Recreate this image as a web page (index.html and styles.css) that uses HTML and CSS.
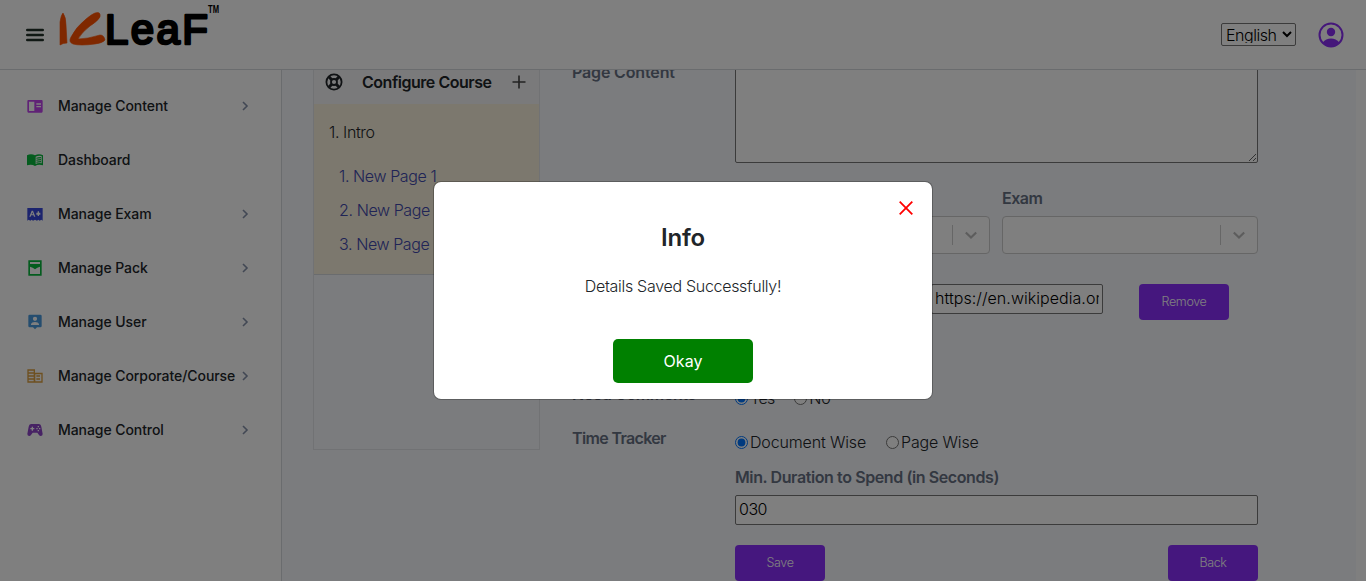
FILE: index.html
```
<!DOCTYPE html>
<html lang="en">
<head>
<meta charset="utf-8">
<title>ICLeaF</title>
<link rel="stylesheet" href="styles.css">
</head>
<body>
<header class="topbar">
  <svg class="burger" width="18" height="14" viewBox="0 0 18 14"><path d="M1.200 2h15.600M1.200 7h15.600M1.200 12h15.600"/></svg>
  <svg class="logo" width="166" height="50" viewBox="0 0 166 50" role="img">
    <path class="logo-ic" d="M1 21Q2 14 4 12Q7 16 7 24L8 42Q4 42 1 44ZM36 12Q42 10 41 16Q39 20 31 25Q23 31 19 38Q28 38 41 34Q45 34 46 39Q44 42 36 43Q21 45 14 43Q9 41 12 36Q17 26 27 18Q33 13 36 12Z"/>
    <text class="logo-text" x="46" y="42.500" textLength="103" lengthAdjust="spacing">LeaF</text>
    <text class="logo-tm" x="149" y="12" textLength="11" lengthAdjust="spacingAndGlyphs">TM</text>
  </svg>
  <div class="topbar-end">
    <select class="language"><option>English</option></select>
    <svg class="avatar" width="26" height="26" viewBox="0 0 26 26"><circle class="ring" cx="13" cy="13" r="11.500"/><circle cx="13" cy="10" r="4.200"/><path d="M4.600 20.500Q8 16.500 13 16.500T21.400 20.500Q18 25 13 25T4.600 20.500Z"/></svg>
  </div>
</header>
<div class="shell">
  <nav class="sidebar">
    <a class="nav-item"><svg class="ni purple" viewBox="0 0 24 24"><path fill-rule="evenodd" d="M2 3h20q1.500 0 1.500 2v15q0 2-1.500 2H2Q.5 22 .5 20V5Q.5 3 2 3ZM3 5.500v14h8v-14ZM14 8v2h7V8ZM14 12v2h7v-2Z"/></svg><span>Manage Content</span><svg class="chev" viewBox="0 0 8 12"><path d="M2 2l4 4-4 4"/></svg></a>
    <a class="nav-item"><svg class="ni green" viewBox="0 0 24 24"><path fill-rule="evenodd" d="M0 5q6-3 12 0q6-3 12 0v15q-7-2-12 1q-5-3-12-1ZM13 7v11q4-2 9-1V6q-5-1-9 1Z"/><path d="M14 8.500q3-1 7-1v1.700q-4 0-7 1ZM14 11.500q3-1 7-1v1.700q-4 0-7 1ZM14 14.500q3-1 7-1v1.700q-4 0-7 1Z"/></svg><span>Dashboard</span></a>
    <a class="nav-item"><svg class="ni blue" viewBox="0 0 24 24"><path fill-rule="evenodd" d="M.5 3h23v19l-2-1.500-2.500 1.500-2-1.500-2 1.500-3-1.500-3 1.500-2-1.500-2 1.500-2.500-1.500-2 1.500ZM7 7l-3.500 9h2l.8-2h3.400l.8 2h2L9 7ZM8 9.500l1 3H7ZM16 8v2h-2v3h2v2h2v-2h2v-3h-2V8Z"/></svg><span>Manage Exam</span><svg class="chev" viewBox="0 0 8 12"><path d="M2 2l4 4-4 4"/></svg></a>
    <a class="nav-item"><svg class="ni green" viewBox="0 0 24 24"><path fill-rule="evenodd" d="M2 .5h20v23H2ZM4.500 3v3h15V3ZM4.500 10v11h15V10l-4 1.500-3.500 2.500-3.500-2.500Z"/></svg><span>Manage Pack</span><svg class="chev" viewBox="0 0 8 12"><path d="M2 2l4 4-4 4"/></svg></a>
    <a class="nav-item"><svg class="ni sky" viewBox="0 0 24 24"><path fill-rule="evenodd" d="M4 1h16q2 0 2 2v15q0 2-2 2h-5l-3 3-3-3H4q-2 0-2-2V3q0-2 2-2ZM12 4a3.200 3.200 0 1 0 0 6.400A3.200 3.200 0 1 0 12 4ZM6 16.500h12v-1q-1-3.500-6-3.500t-6 3.500Z"/></svg><span>Manage User</span><svg class="chev" viewBox="0 0 8 12"><path d="M2 2l4 4-4 4"/></svg></a>
    <a class="nav-item"><svg class="ni amber" viewBox="0 0 24 24"><path fill-rule="evenodd" d="M.5 2H12v5h11.500v15H.5ZM2.500 4.200v2.300h7.500V4.200ZM2.500 8.700V11h7.500V8.700ZM2.500 13.200v2.300h7.500v-2.300ZM2.500 17.700V20h7.500v-2.300ZM12.500 9.200V20h9V9.200Z"/><path d="M14 11h5.500v2H14ZM14 15.500h5.500v2H14Z"/></svg><span>Manage Corporate/Course</span><svg class="chev" viewBox="0 0 8 12"><path d="M2 2l4 4-4 4"/></svg></a>
    <a class="nav-item"><svg class="ni violet" viewBox="0 0 24 24"><path fill-rule="evenodd" d="M6 3h12q3 0 3.500 4L23.500 18q0 3-3 3-1.500 0-2.500-1.500L15.500 16h-7L6 19.500Q5 21 3.500 21 .5 21 .5 18L2.500 7Q3 3 6 3ZM7 7v2H5v2h2v2h2v-2h2V9H9V7ZM16 6v2h2V6ZM14 9v2h2V9ZM18 9v2h2V9ZM16 12v2h2v-2Z"/></svg><span>Manage Control</span><svg class="chev" viewBox="0 0 8 12"><path d="M2 2l4 4-4 4"/></svg></a>
  </nav>
  <main class="main">
    <section class="course">
      <div class="course-head">
        <svg class="wheel" width="18" height="18" viewBox="0 0 18 18"><circle cx="9" cy="9" r="7.600"/><circle cx="9" cy="9" r="3"/><path class="spokes" d="M3.800 3.800l3 3M14.200 3.800l-3 3M3.800 14.200l3-3M14.200 14.200l-3-3"/></svg>
        <span>Configure Course</span>
        <svg class="plus" width="14" height="14" viewBox="0 0 14 14"><path d="M7 .5v13M.5 7h13"/></svg>
      </div>
      <div class="course-body">
        <div class="chapter">1. Intro</div>
        <a class="page">1. New Page 1</a>
        <a class="page">2. New Page 2</a>
        <a class="page">3. New Page 3</a>
      </div>
    </section>
    <form class="form">
      <div class="row row-content"><label class="label">Page Content</label><textarea class="area"></textarea></div>
      <div class="row row-selects"><span></span>
        <div class="selects">
          <div><label class="label">Survey</label><div class="picker"><svg viewBox="0 0 20 20"><path d="M4.800 7.500l5.200 5 5.200-5"/></svg></div></div>
          <div><label class="label">Exam</label><div class="picker"><svg viewBox="0 0 20 20"><path d="M4.800 7.500l5.200 5 5.200-5"/></svg></div></div>
        </div>
      </div>
      <div class="row row-link"><span></span><div class="link"><input class="field url" value="https://en.wikipedia.org/wiki/Main_Page"><button type="button" class="btn">Remove</button></div></div>
      <div class="row row-comments"><label class="label">Need Comments</label><div class="radios"><input type="radio" name="c" checked><span class="yes">Yes</span><input type="radio" name="c"><span>No</span></div></div>
      <div class="row row-tracker"><label class="label">Time Tracker</label><div class="radios"><input type="radio" name="t" checked><span class="doc">Document Wise</span><input type="radio" name="t"><span>Page Wise</span></div></div>
      <div class="row row-duration"><span></span><div><label class="label min">Min. Duration to Spend (in Seconds)</label><input class="field" value="030"></div></div>
      <div class="row row-actions"><span></span><div class="actions"><button type="button" class="btn">Save</button><button type="button" class="btn">Back</button></div></div>
    </form>
  </main>
</div>
<div class="overlay">
  <div class="modal" role="dialog">
    <svg class="close" width="14" height="14" viewBox="0 0 14 14"><path d="M.7.7l12.600 12.600M13.300.7L.7 13.300"/></svg>
    <h2 class="modal-title">Info</h2>
    <p class="modal-text">Details Saved Successfully!</p>
    <button type="button" class="okay">Okay</button>
  </div>
</div>
</body>
</html>
```
FILE: styles.css
```
* { box-sizing: border-box; }
body { margin: 0; height: 581px; overflow: hidden; background: #fff; color: #212529; font: 300 16px/24px Inter, sans-serif; }
input, button, select, textarea { font: inherit; }
.topbar { height: 70px; border-bottom: 1px solid #d5d8dc; display: flex; align-items: center; padding: 0 22px 0 26px; }
.burger { stroke: #213028; stroke-width: 2.4; stroke-linecap: round; }
.logo { margin: -18px 0 0 15px; overflow: visible; }
.logo-ic { fill: #ff5000; stroke: #ff5000; stroke-width: .6; }
.logo-text { font: 42px "Liberation Sans", sans-serif; stroke: #000; stroke-width: 2.6; stroke-linejoin: round; }
.logo-tm { font: bold 10px "Liberation Sans", sans-serif; }
.topbar-end { margin-left: auto; display: flex; align-items: center; gap: 22px; }
.language { width: 75px; height: 23px; padding: 0 0 2px; border: 1px solid #767676; border-radius: 2px; background: #fff; color: #000; letter-spacing: -.45px; }
.avatar { fill: #8a2ff5; }
.ring { fill: none; stroke: #8a2ff5; stroke-width: 2; }
.shell { display: flex; height: 511px; }
.sidebar { width: 282px; flex: none; border-right: 1px solid #d5d8dc; padding-top: 9px; }
.nav-item { display: flex; align-items: center; height: 54px; padding: 0 32px 0 27px; font-size: 14px; font-weight: 500; letter-spacing: -.07px; white-space: nowrap; }
.ni { width: 16px; height: 16px; margin-right: 15px; }
.chev { width: 8px; height: 12px; margin-left: auto; fill: none; stroke: #8490a8; stroke-width: 1.6; }
.purple { fill: #c044ec; }
.green { fill: #08b83c; }
.blue { fill: #3848dc; }
.sky { fill: #4a9ade; }
.amber { fill: #dda040; }
.violet { fill: #8e44c8; }
.main { width: 1074px; display: flex; align-items: flex-start; gap: 32px; padding-left: 31px; background: #f6f8fc; overflow: hidden; }
.course { width: 227px; height: 380px; border: 1px solid #e2e4e8; border-top: 0; }
.course-head { height: 34px; display: flex; align-items: center; padding: 0 13px 10px 11px; background: #f5f5f6; font-weight: 600; letter-spacing: -.47px; }
.course-head span { margin-left: 19px; }
.wheel { fill: none; stroke: #212529; stroke-width: 1.8; }
.spokes { stroke-width: 3; }
.plus { margin-left: auto; fill: none; stroke: #444; stroke-width: 1.6; }
.course-body { height: 171px; padding: 16px 0 0 15px; background: #f9f0dc; border-bottom: 1px solid #d5d8dc; letter-spacing: -.4px; }
.chapter { margin-bottom: 15px; }
.page { display: block; height: 34px; padding: 5px 0 5px 10px; color: #4048ac; }
.form { width: 686px; }
.row { display: grid; grid-template-columns: 163px 523px; align-items: start; }
.label { display: block; font-weight: 600; letter-spacing: -.4px; color: #667083; }
.row-content .label { margin-top: -10px; letter-spacing: -.15px; }
.area { display: block; width: 523px; height: 113px; margin-top: -20px; border: 1px solid #767676; border-radius: 2px; background: #fff; }
.row-selects { margin-top: 23px; }
.selects { display: grid; grid-template-columns: 255px 256px; gap: 12px; }
.selects .label { letter-spacing: -.5px; }
.picker { height: 38px; margin-top: 6px; border: 1px solid #ccc; border-radius: 4px; background: #fff; display: flex; justify-content: flex-end; padding: 8px 0; }
.picker svg { width: 37px; height: 20px; border-left: 1px solid #ccc; fill: none; stroke: #bbb; stroke-width: 2.2; }
.row-link { margin-top: 30px; }
.link { display: flex; justify-content: flex-end; gap: 36px; padding-right: 29px; }
.field { display: block; width: 523px; height: 30px; padding: 0 3px 2px; border: 1px solid #767676; border-radius: 2px; background: #fff; color: #000; letter-spacing: -.5px; }
.url { width: 172px; letter-spacing: .05px; }
.btn { width: 90px; height: 36px; padding: 0; border: 0; border-radius: 4px; background: #8a2ffc; color: #fff; font-size: 12.5px; letter-spacing: -.35px; }
.row-comments { margin-top: 66px; }
.row-comments .label, .row-tracker .label { margin-top: -4px; }
.row-tracker .label { letter-spacing: -.65px; }
.radios { display: flex; align-items: center; height: 24px; letter-spacing: -.15px; }
.radios input { margin: 1px 2px 0 0; width: 13px; height: 13px; }
.yes, .doc { margin-right: 20px; }
.yes { letter-spacing: -.9px; }
.row-tracker { margin-top: 20px; }
.row-duration { margin-top: 11px; }
.min { margin-bottom: 6px; }
.row-actions { margin-top: 20px; }
.actions { display: flex; justify-content: space-between; }
.overlay { position: absolute; inset: 0; background: rgba(0, 0, 0, .5); }
.modal { position: absolute; left: 434px; top: 182px; width: 498px; height: 217px; border-radius: 7px; background: #fff; box-shadow: 0 0 0 1px rgba(0, 0, 0, .25); display: flex; flex-direction: column; align-items: center; }
.close { position: absolute; right: 19px; top: 19px; fill: none; stroke: #f00; stroke-width: 1.8; }
.modal-title { margin: 41px 0 0; font-size: 24px; line-height: 30px; font-weight: 600; letter-spacing: -.2px; }
.modal-text { margin: 21px 0 0; letter-spacing: -.3px; }
.okay { width: 140px; height: 44px; margin-top: 41px; padding-bottom: 2px; border: 0; border-radius: 5px; background: #008000; color: #fff; font-weight: 400; }
```
